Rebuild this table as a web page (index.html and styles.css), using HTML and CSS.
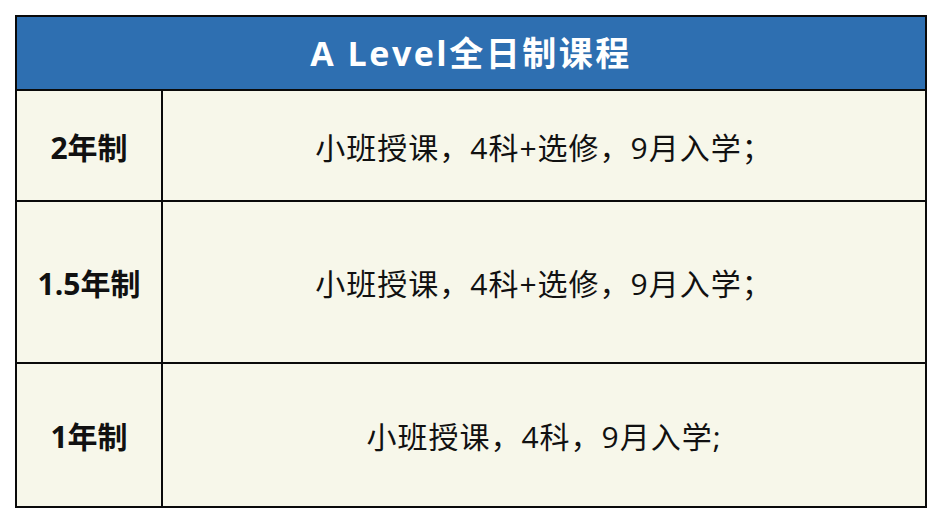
FILE: index.html
```html
<!DOCTYPE html>
<html lang="zh">
<head>
<meta charset="utf-8">
<title>A Level全日制课程</title>
<link rel="stylesheet" href="styles.css">
</head>
<body>
<div class="course-table">
  <div class="cell head">A Level全日制课程</div>
  <div class="cell label row1">2年制</div>
  <div class="cell desc row1">小班授课，4科+选修，9月入学；</div>
  <div class="cell label row2">1.5年制</div>
  <div class="cell desc row2">小班授课，4科+选修，9月入学；</div>
  <div class="cell label row3">1年制</div>
  <div class="cell desc row3">小班授课，4科，9月入学;</div>
</div>
</body>
</html>
```
FILE: styles.css
```css
html, body {
  margin: 0;
  padding: 0;
  background: #ffffff;
}
body {
  padding: 15px;
  font-family: "Open Sans", "Noto Sans CJK SC", sans-serif;
}
.course-table {
  width: 912px;
  box-sizing: border-box;
  background: #0a0a0a;
  padding: 2px;
  display: grid;
  grid-template-columns: 144px 1fr;
  grid-template-rows: 72px 109px 160px 142px;
  gap: 2px;
}
.cell {
  display: flex;
  align-items: center;
  justify-content: center;
  background: #f7f7ea;
  color: #111111;
}
.head {
  grid-column: 1 / 3;
  background: #2e6fb1;
  color: #ffffff;
  font-weight: 700;
  font-size: 34px;
  letter-spacing: 2.5px;
  padding-bottom: 4px;
}
.label {
  font-weight: 700;
  font-size: 30px;
}
.desc {
  font-size: 30px;
  font-weight: 400;
  letter-spacing: 1px;
}
```
